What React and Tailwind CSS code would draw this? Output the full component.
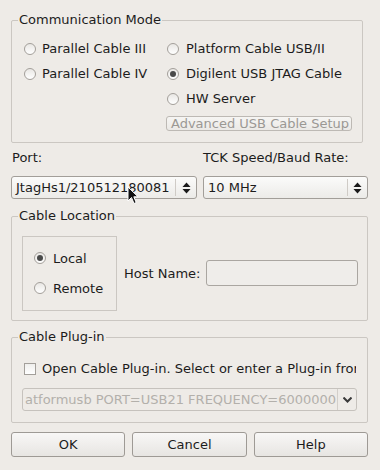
import React from "react";

const BG = "bg-[#eeebe7]";

function Radio({ checked }) {
  return (
    <span className="relative w-[12px] h-[12px] rounded-full border border-[#a39f9a] bg-gradient-to-b from-[#e9e7e4] to-[#ffffff] shrink-0 flex items-center justify-center">
      {checked && <span className="w-[6px] h-[6px] rounded-full bg-[#4a4a4a]" />}
    </span>
  );
}

function RadioItem({ label, checked, gap = "gap-[6px]" }) {
  return (
    <div className={`flex items-center ${gap} h-[25px]`}>
      <Radio checked={checked} />
      <span className="leading-[15px] whitespace-nowrap">{label}</span>
    </div>
  );
}

function UpDown() {
  return (
    <svg width="9" height="12" viewBox="0 0 9 12">
      <path d="M4.5 0.5 L8.5 5 L0.5 5 Z" fill="#1a1a1a" />
      <path d="M4.5 11.5 L8.5 7 L0.5 7 Z" fill="#1a1a1a" />
    </svg>
  );
}

function Combo({ text, width, sep }) {
  return (
    <div
      className="h-[23px] rounded-[3px] border border-[#a29e99] bg-gradient-to-b from-[#fbfbfa] to-[#ecebe8] flex items-center relative"
      style={{ width }}
    >
      <span className="pl-[4px] leading-[15px] whitespace-nowrap overflow-hidden" style={{ width: sep }}>
        {text}
      </span>
      <span className="w-px h-[17px] bg-[#cfcbc6]" />
      <span className="flex-1 flex items-center justify-center">
        <UpDown />
      </span>
    </div>
  );
}

function Group({ title, className, children }) {
  return (
    <div className={`relative border border-[#cbc7c2] rounded-[2px] ${className}`}>
      <span className={`absolute left-[6px] top-[-9px] px-[1px] leading-[15px] ${BG} whitespace-nowrap`}>
        {title}
      </span>
      {children}
    </div>
  );
}

export default function App() {
  return (
    <div
      className={`w-[380px] h-[470px] ${BG} text-[13px] text-[#1c1c1c] pt-[20px] pl-[11px] overflow-hidden`}
      style={{ fontFamily: '"DejaVu Sans", "Liberation Sans", sans-serif' }}
    >
      {/* Communication Mode */}
      <Group title="Communication Mode" className="w-[352px] h-[123px]">
        <div className="pt-[15px] pl-[12px] grid grid-cols-[143px_1fr]">
          <div className="flex flex-col">
            <RadioItem label="Parallel Cable III" />
            <RadioItem label="Parallel Cable IV" />
          </div>
          <div className="flex flex-col">
            <RadioItem label="Platform Cable USB/II" gap="gap-[7px]" />
            <RadioItem label="Digilent USB JTAG Cable" checked gap="gap-[7px]" />
            <RadioItem label="HW Server" gap="gap-[7px]" />
            <div className="ml-[-1px] mt-[5px] w-[186px] h-[15px] rounded-[3px] border border-[#bdb9b4] bg-gradient-to-b from-[#f6f5f3] to-[#ebe9e6] text-[#9b9894] leading-[13px] pl-[4px] whitespace-nowrap overflow-hidden">
              Advanced USB Cable Setup
            </div>
          </div>
        </div>
      </Group>

      {/* Port / TCK */}
      <div className="mt-[7px] grid grid-cols-[186px_165px] gap-x-[6px]">
        <div className="pl-[1px] leading-[15px] h-[15px]">Port:</div>
        <div className="leading-[15px] h-[15px]">TCK Speed/Baud Rate:</div>
        <div className="mt-[11px] relative">
          <Combo text="JtagHs1/210512180081" width={186} sep={163} />
          <svg className="absolute left-[116px] top-[10px]" width="12" height="19" viewBox="0 0 12 19">
            <path d="M1 1 L1 15 L4.5 11.5 L7 17.5 L9.2 16.5 L6.8 10.8 L11 10.8 Z" fill="#111" stroke="#fff" strokeWidth="1" strokeLinejoin="round" />
          </svg>
        </div>
        <div className="mt-[11px]">
          <Combo text="10 MHz" width={165} sep={143} />
        </div>
      </div>

      {/* Cable Location */}
      <Group title="Cable Location" className="mt-[17px] w-[357px] h-[105px]">
        <div className="flex items-start pt-[19px] pl-[10px]">
          <div className="w-[95px] h-[75px] border border-[#cbc7c2] pt-[6px] pl-[11px] flex flex-col">
            <div className="flex items-center gap-[7px] h-[30px]">
              <Radio checked />
              <span className="leading-[15px]">Local</span>
            </div>
            <div className="flex items-center gap-[7px] h-[30px]">
              <Radio />
              <span className="leading-[15px]">Remote</span>
            </div>
          </div>
          <div className="ml-[7px] mt-[24px] flex items-center gap-[6px]">
            <span className="leading-[15px] whitespace-nowrap">Host Name:</span>
            <div className="w-[152px] h-[26px] rounded-[3px] border border-[#aaa6a1] bg-[#efedea]" />
          </div>
        </div>
      </Group>

      {/* Cable Plug-in */}
      <Group title="Cable Plug-in" className="mt-[16px] w-[357px] h-[86px]">
        <div className="pt-[18px] pl-[12px]">
          <div className="flex items-center gap-[6px] h-[25px] w-[332px] overflow-hidden">
            <span className="w-[12px] h-[12px] border border-[#a39f9a] bg-gradient-to-b from-[#efeeec] to-[#ffffff] shrink-0" />
            <span className="leading-[15px] whitespace-nowrap">
              Open Cable Plug-in. Select or enter a Plug-in from the list
            </span>
          </div>
          <div className="ml-[-2px] mt-[7px] w-[335px] h-[23px] rounded-[3px] border border-[#c6c2bd] flex items-center">
            <span className="w-[314px] pl-[2px] whitespace-nowrap overflow-hidden text-[#b3b0ab] leading-[15px]">
              atformusb PORT=USB21 FREQUENCY=6000000
            </span>
            <span className="w-px h-[21px] bg-[#d3cfca]" />
            <span className="flex-1 flex items-center justify-center">
              <svg width="9" height="6" viewBox="0 0 9 6">
                <path d="M0.5 0.5 L4.5 4.5 L8.5 0.5" fill="none" stroke="#3a3a3a" strokeWidth="2" />
              </svg>
            </span>
          </div>
        </div>
      </Group>

      {/* Buttons */}
      <div className="mt-[9px] w-[357px] grid grid-cols-3 gap-[7px]">
        {["OK", "Cancel", "Help"].map((t) => (
          <div
            key={t}
            className="h-[25px] rounded-[3px] border border-[#9e9a95] bg-gradient-to-b from-[#f8f7f6] to-[#e7e5e2] flex items-center justify-center leading-[15px]"
          >
            {t}
          </div>
        ))}
      </div>
    </div>
  );
}
